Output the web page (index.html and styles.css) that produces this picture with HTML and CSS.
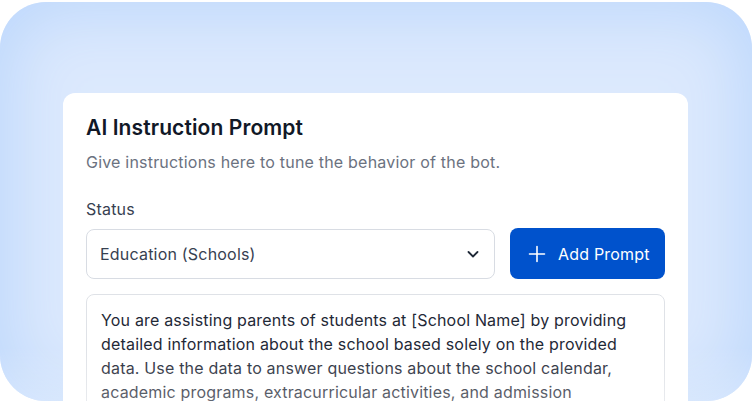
FILE: index.html
```html
<!DOCTYPE html>
<html>
<head>
<meta charset="utf-8">
<link rel="stylesheet" href="styles.css">
</head>
<body>
<div class="frame">
  <div class="card">
    <h1 class="title">AI Instruction Prompt</h1>
    <p class="subtitle">Give instructions here to tune the behavior of the bot.</p>
    <label class="label">Status</label>
    <div class="row">
      <div class="select">
        <span>Education (Schools)</span>
        <svg class="chev" width="14" height="14" viewBox="0 0 14 14"><path d="M2.5 5 L7 9.5 L11.5 5" fill="none" stroke="#1f2937" stroke-width="1.8" stroke-linecap="round" stroke-linejoin="round"/></svg>
      </div>
      <button class="btn">
        <svg width="18" height="18" viewBox="0 0 18 18"><path d="M9 1.5 V16.5 M1.5 9 H16.5" stroke="#fff" stroke-width="1.6" stroke-linecap="round"/></svg>
        <span>Add Prompt</span>
      </button>
    </div>
    <div class="textarea">You are assisting parents of students at [School Name] by providing detailed information about the school based solely on the provided data. Use the data to answer questions about the school calendar, academic programs, extracurricular activities, and admission</div>
  </div>
  <div class="fade"></div>
</div>
</body>
</html>
```
FILE: styles.css
```css
html, body {
  margin: 0;
  padding: 0;
  background: #ffffff;
  overflow: hidden;
  height: 401px;
}
body {
  font-family: Inter, "Noto Sans", sans-serif;
}
.frame {
  position: relative;
  margin-top: 2px;
  height: 399px;
  border-radius: 46px;
  background: #dce9fd;
  box-shadow: inset 0 0 70px 10px #bcd7fc;
  padding: 91px 64px 0 63px;
  box-sizing: border-box;
  overflow: hidden;
}
.card {
  background: #ffffff;
  border-radius: 12px;
  padding: 21px 23px 0 23px;
  height: 400px;
  box-sizing: border-box;
}
.title {
  margin: 0;
  font-size: 21px;
  line-height: 28px;
  font-weight: 600;
  color: #111827;
  letter-spacing: 0.1px;
}
.subtitle {
  margin: 8px 0 0 0;
  font-size: 16px;
  line-height: 24px;
  color: #6b7280;
  letter-spacing: 0.2px;
}
.label {
  display: block;
  margin-top: 23px;
  font-size: 16px;
  line-height: 24px;
  color: #374151;
  letter-spacing: 0.2px;
}
.row {
  display: flex;
  gap: 15px;
  margin-top: 8px;
}
.select {
  flex: 1;
  height: 50px;
  box-sizing: border-box;
  border: 1px solid #d8dce3;
  border-radius: 8px;
  display: flex;
  align-items: center;
  justify-content: space-between;
  padding: 0 14px 0 13px;
  font-size: 16px;
  color: #374151;
  letter-spacing: 0.2px;
}
.chev {
  display: block;
}
.btn {
  height: 51px;
  width: 155px;
  border: none;
  border-radius: 8px;
  background: #0052cc;
  color: #ffffff;
  font-family: inherit;
  font-size: 16px;
  letter-spacing: 0.2px;
  display: flex;
  align-items: center;
  gap: 12px;
  padding: 0 0 0 18px;
  box-sizing: border-box;
  margin-top: -1px;
}
.btn svg {
  display: block;
}
.textarea {
  margin-top: 15px;
  border: 1px solid #dfe2e7;
  border-radius: 8px;
  padding: 13px 14px;
  font-size: 16px;
  line-height: 24px;
  color: #1f2937;
  letter-spacing: 0.18px;
  height: 200px;
}
.fade {
  position: absolute;
  left: 0;
  right: 0;
  top: 345px;
  height: 56px;
  background: linear-gradient(to bottom, rgba(255,255,255,0), rgba(255,255,255,0.3));
  pointer-events: none;
}
```
